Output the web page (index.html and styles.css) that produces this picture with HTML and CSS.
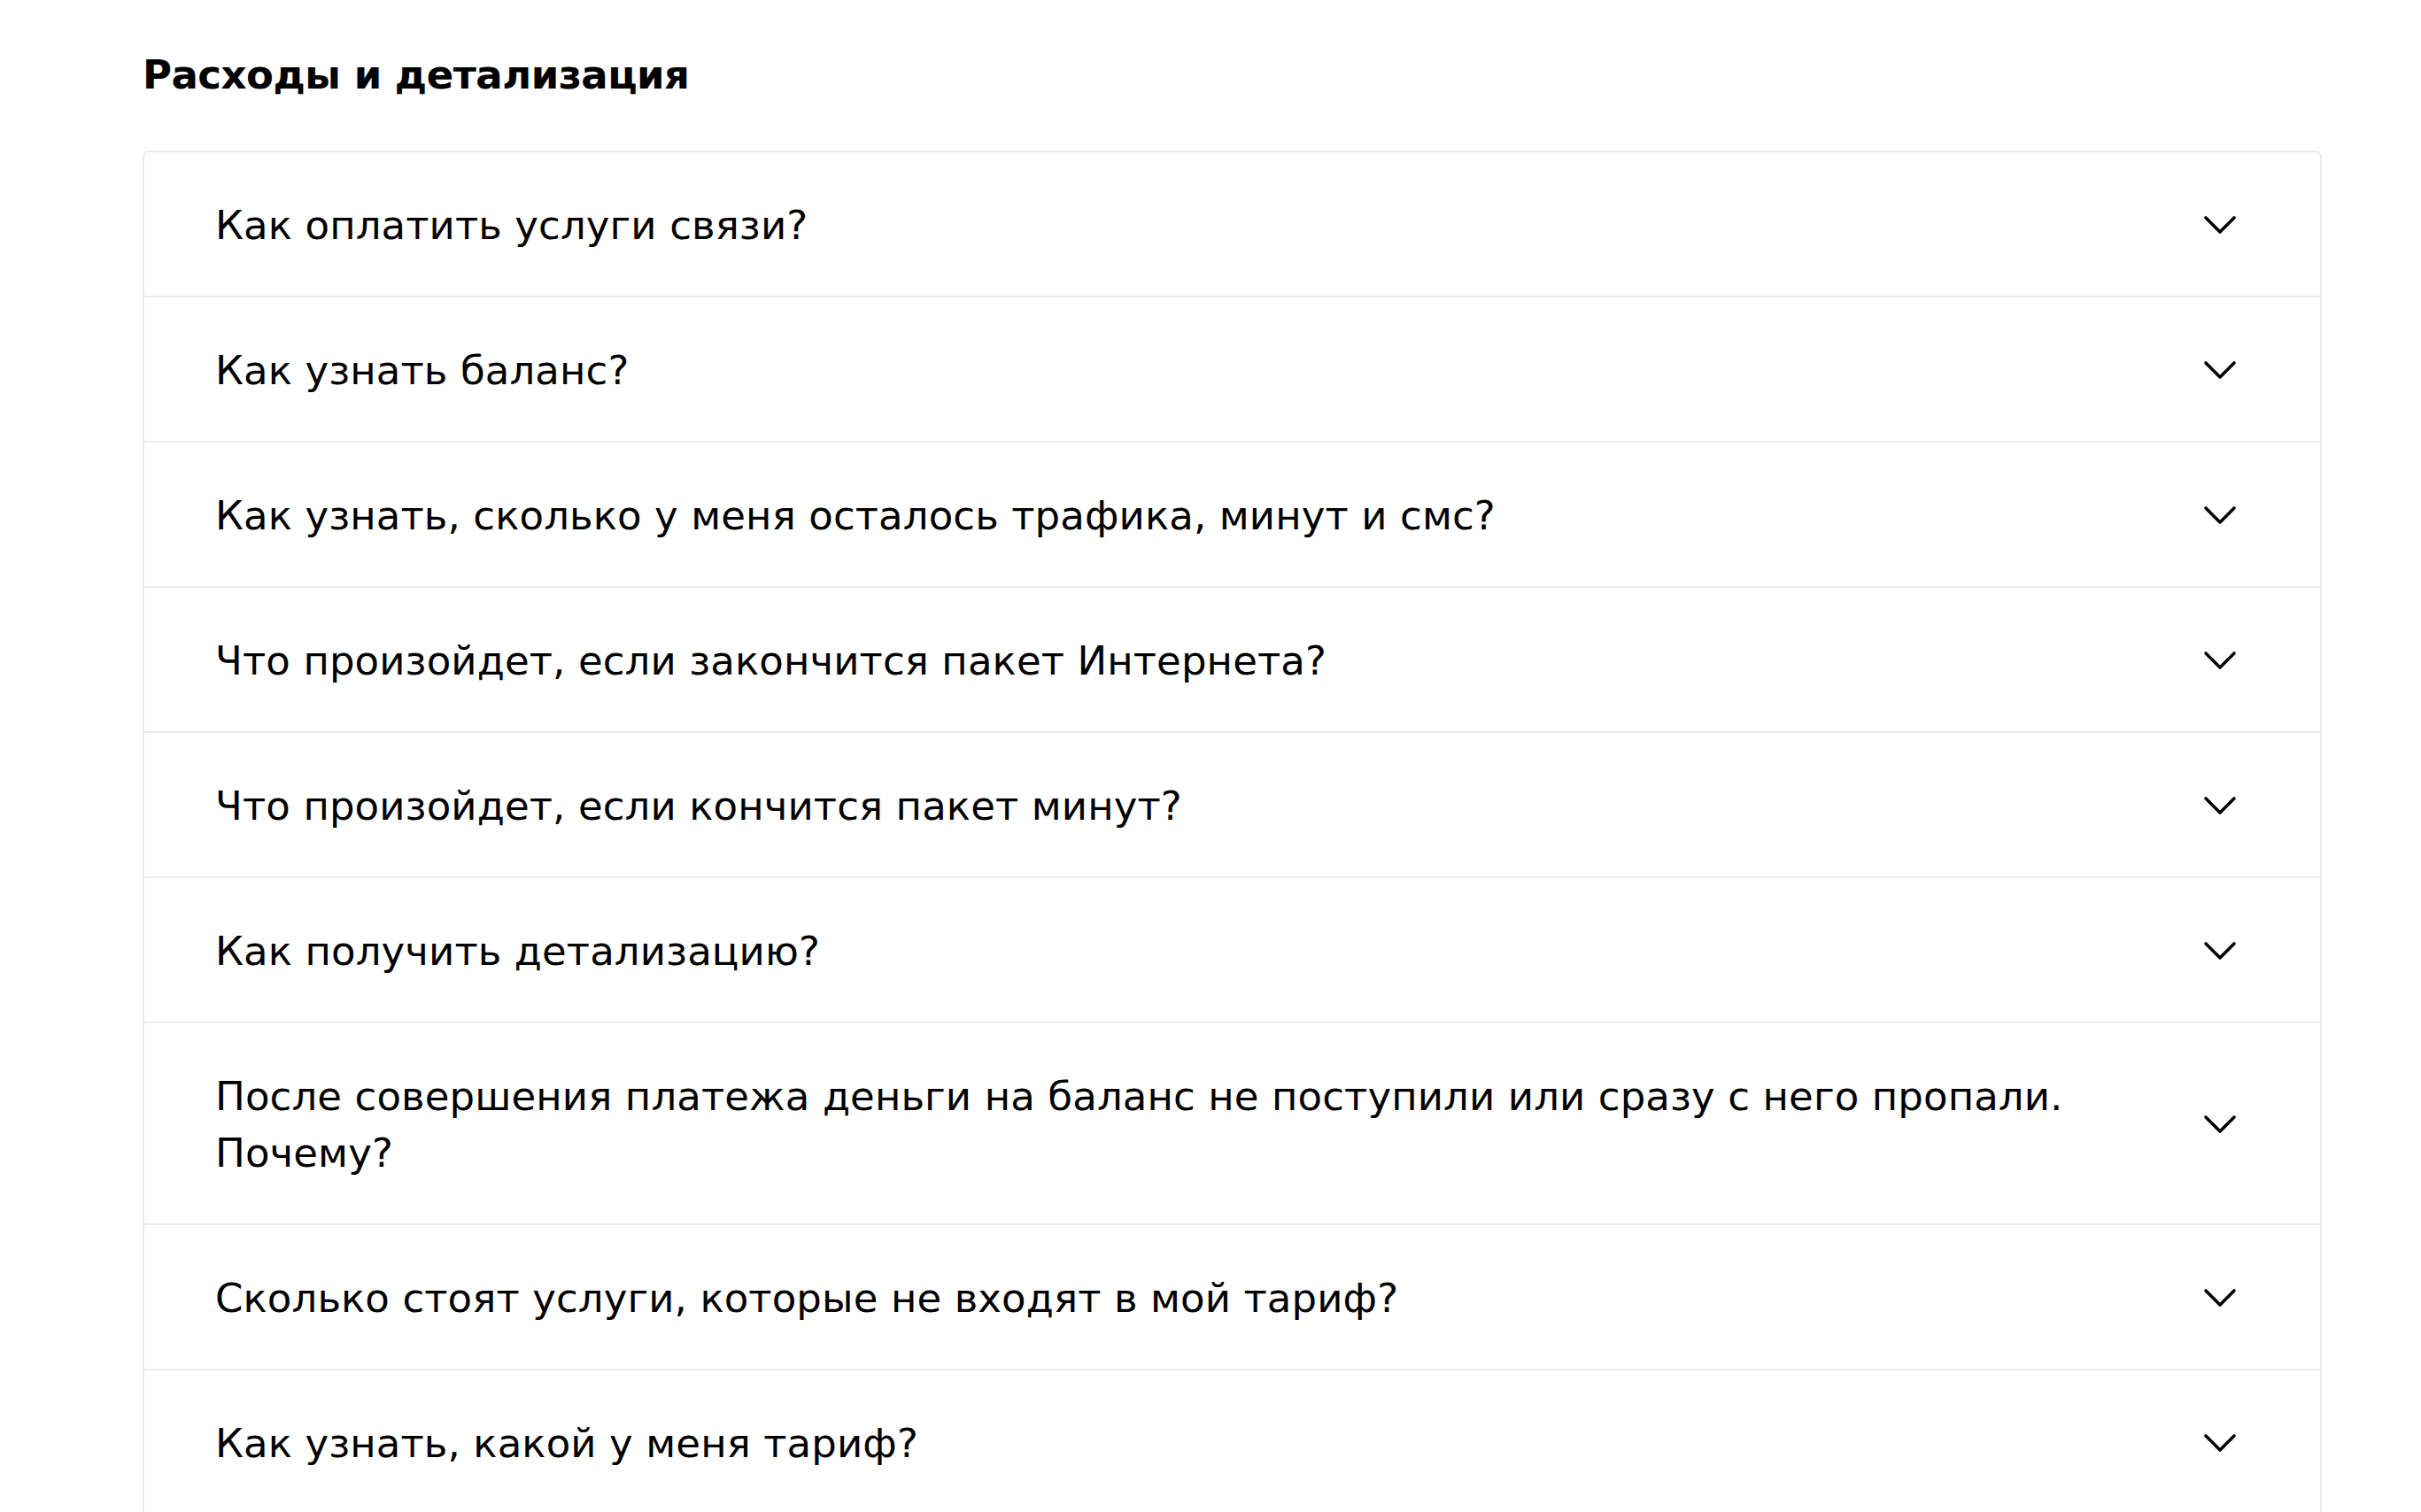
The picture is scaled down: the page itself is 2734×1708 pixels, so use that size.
FILE: index.html
```html
<!DOCTYPE html>
<html lang="ru">
<head>
<meta charset="utf-8">
<title>Расходы и детализация</title>
<link rel="stylesheet" href="styles.css">
</head>
<body>
<main class="page">
  <h2 class="title">Расходы и детализация</h2>
  <div class="faq">
    <div class="item"><span class="q">Как оплатить услуги связи?</span><svg class="chev" viewBox="0 0 40 24" width="40" height="24"><path d="M4 4 L20 20 L36 4"/></svg></div>
    <div class="item"><span class="q">Как узнать баланс?</span><svg class="chev" viewBox="0 0 40 24" width="40" height="24"><path d="M4 4 L20 20 L36 4"/></svg></div>
    <div class="item"><span class="q">Как узнать, сколько у меня осталось трафика, минут и смс?</span><svg class="chev" viewBox="0 0 40 24" width="40" height="24"><path d="M4 4 L20 20 L36 4"/></svg></div>
    <div class="item"><span class="q">Что произойдет, если закончится пакет Интернета?</span><svg class="chev" viewBox="0 0 40 24" width="40" height="24"><path d="M4 4 L20 20 L36 4"/></svg></div>
    <div class="item"><span class="q">Что произойдет, если кончится пакет минут?</span><svg class="chev" viewBox="0 0 40 24" width="40" height="24"><path d="M4 4 L20 20 L36 4"/></svg></div>
    <div class="item"><span class="q">Как получить детализацию?</span><svg class="chev" viewBox="0 0 40 24" width="40" height="24"><path d="M4 4 L20 20 L36 4"/></svg></div>
    <div class="item"><span class="q">После совершения платежа деньги на баланс не поступили или сразу с него пропали. Почему?</span><svg class="chev" viewBox="0 0 40 24" width="40" height="24"><path d="M4 4 L20 20 L36 4"/></svg></div>
    <div class="item"><span class="q">Сколько стоят услуги, которые не входят в мой тариф?</span><svg class="chev" viewBox="0 0 40 24" width="40" height="24"><path d="M4 4 L20 20 L36 4"/></svg></div>
    <div class="item"><span class="q">Как узнать, какой у меня тариф?</span><svg class="chev" viewBox="0 0 40 24" width="40" height="24"><path d="M4 4 L20 20 L36 4"/></svg></div>
    <div class="item"><span class="q">Как изменить тариф?</span><svg class="chev" viewBox="0 0 40 24" width="40" height="24"><path d="M4 4 L20 20 L36 4"/></svg></div>
  </div>
</main>
</body>
</html>
```
FILE: styles.css
```css
html, body {
  margin: 0;
  padding: 0;
  background: #fff;
}
body {
  font-family: "DejaVu Sans", "Noto Sans", sans-serif;
  color: #000;
}
.page {
  padding: 53px 0 0 161px;
  width: 2461px;
}
.title {
  margin: 0 0 53px 0;
  font-size: 45px;
  line-height: 64px;
  font-weight: bold;
  letter-spacing: -0.5px;
}
.faq {
  border: 2px solid #ebebeb;
  border-radius: 8px;
  background: #fff;
}
.item {
  display: flex;
  align-items: center;
  padding: 48px 93px 47px 80px;
  border-bottom: 2px solid #ebebeb;
}
.q {
  flex: 1;
  padding-top: 3px;
  font-size: 45px;
  line-height: 64px;
  letter-spacing: 0.12px;
}
.chev {
  flex: none;
  display: block;
}
.chev path {
  fill: none;
  stroke: #000;
  stroke-width: 3.6;
  stroke-linecap: round;
  stroke-linejoin: round;
}
```
